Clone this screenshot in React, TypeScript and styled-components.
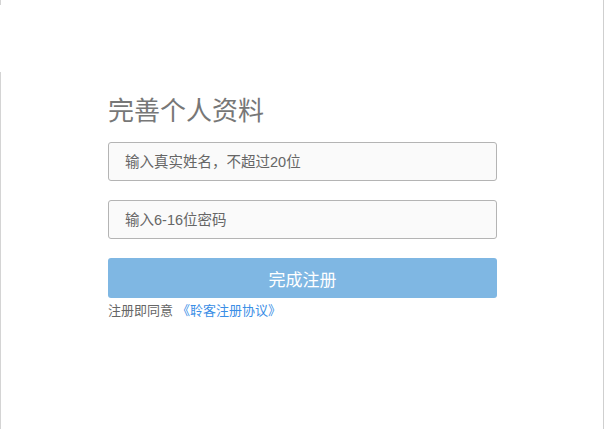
import React from 'react';
import styled, { createGlobalStyle } from 'styled-components';

const GlobalStyle = createGlobalStyle`
  html, body {
    margin: 0;
    padding: 0;
    background: #ffffff;
  }
  body {
    font-family: "Liberation Sans", "Noto Sans CJK SC", sans-serif;
  }
`;

const Frame = styled.div`
  position: relative;
  box-sizing: border-box;
  width: 604px;
  height: 429px;
  border-right: 1px solid #cfcfcf;
  padding: 94px 0 0 108px;

  &::before,
  &::after {
    content: '';
    position: absolute;
    left: 0;
    width: 1px;
    background: #d4d4d4;
  }
  &::before {
    top: 0;
    height: 5px;
  }
  &::after {
    top: 72px;
    bottom: 0;
  }
`;

const Form = styled.form`
  display: flex;
  flex-direction: column;
  width: 389px;
`;

const Title = styled.h2`
  margin: 0 0 14px;
  font-size: 26px;
  font-weight: normal;
  line-height: 34px;
  color: #777777;
`;

const Field = styled.input`
  box-sizing: border-box;
  height: 39px;
  margin-bottom: 19px;
  padding: 0 16px;
  border: 1px solid #b4b4b4;
  border-radius: 3px;
  background: #fafafa;
  font-family: inherit;
  font-size: 14.5px;
  color: #333;
  outline: none;

  &::placeholder {
    color: #666666;
  }
`;

const Submit = styled.button`
  height: 40px;
  border: none;
  border-radius: 3px;
  background: #7fb7e3;
  color: #ffffff;
  font-family: inherit;
  font-size: 17px;
  cursor: pointer;
`;

const Agreement = styled.p`
  margin: 4px 0 0;
  font-size: 13px;
  line-height: 18px;
  color: #666666;

  a {
    color: #3a8ee6;
    text-decoration: none;
    margin-left: 4px;
  }
`;

export default function App() {
  return (
    <>
      <GlobalStyle />
      <Frame>
        <Form onSubmit={e => e.preventDefault()}>
          <Title>完善个人资料</Title>
          <Field type="text" placeholder="输入真实姓名，不超过20位" />
          <Field type="password" placeholder="输入6-16位密码" />
          <Submit type="submit">完成注册</Submit>
          <Agreement>
            注册即同意<a href="#">《聆客注册协议》</a>
          </Agreement>
        </Form>
      </Frame>
    </>
  );
}
